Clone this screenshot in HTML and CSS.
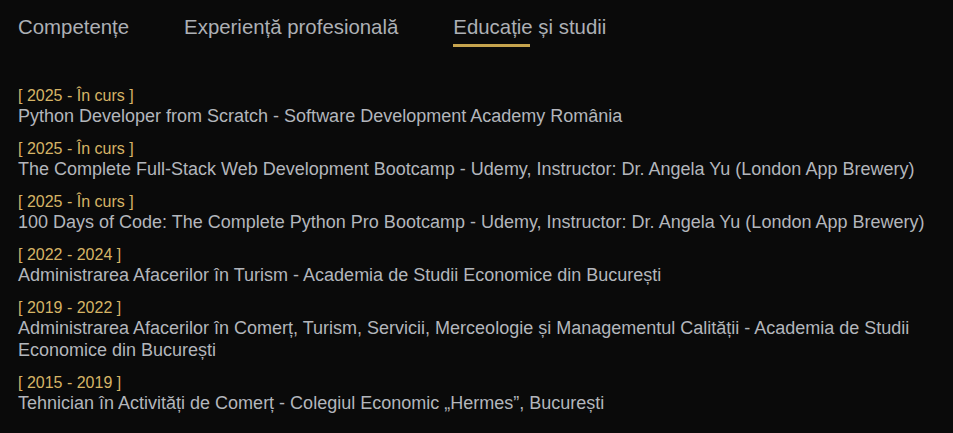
FILE: index.html
```html
<!DOCTYPE html>
<html lang="ro">
<head>
<meta charset="utf-8">
<title>Educație și studii</title>
<link rel="stylesheet" href="styles.css">
</head>
<body>
<div class="page">
  <nav class="tabs">
    <span class="tab">Competențe</span>
    <span class="tab">Experiență profesională</span>
    <span class="tab active">Educație și studii</span>
  </nav>
  <ul class="edu">
    <li class="item"><div class="date">[ 2025 - În curs ]</div><div class="title">Python Developer from Scratch - Software Development Academy România</div></li>
    <li class="item"><div class="date">[ 2025 - În curs ]</div><div class="title">The Complete Full-Stack Web Development Bootcamp - Udemy, Instructor: Dr. Angela Yu (London App Brewery)</div></li>
    <li class="item"><div class="date">[ 2025 - În curs ]</div><div class="title">100 Days of Code: The Complete Python Pro Bootcamp - Udemy, Instructor: Dr. Angela Yu (London App Brewery)</div></li>
    <li class="item"><div class="date">[ 2022 - 2024 ]</div><div class="title">Administrarea Afacerilor în Turism - Academia de Studii Economice din București</div></li>
    <li class="item"><div class="date">[ 2019 - 2022 ]</div><div class="title">Administrarea Afacerilor în Comerț, Turism, Servicii, Merceologie și Managementul Calității - Academia de Studii Economice din București</div></li>
    <li class="item"><div class="date">[ 2015 - 2019 ]</div><div class="title">Tehnician în Activități de Comerț - Colegiul Economic „Hermes”, București</div></li>
  </ul>
</div>
</body>
</html>
```

FILE: styles.css
```css
html, body {
  margin: 0;
  padding: 0;
  background: #0a0a0a;
}
body {
  font-family: "Liberation Sans", Arial, sans-serif;
  color: #b3b6bc;
}
.page {
  padding: 16px 18px 0 18px;
}
.tabs {
  display: flex;
  gap: 55px;
}
.tab {
  position: relative;
  font-size: 20.4px;
  line-height: 23px;
  color: #adb0b5;
  padding-bottom: 8px;
}
.tab.active::after {
  content: "";
  position: absolute;
  left: 0;
  bottom: 0;
  width: 50%;
  height: 3px;
  background: #c6a44e;
}
.edu {
  list-style: none;
  margin: 39px 0 0 0;
  padding: 0;
  display: flex;
  flex-direction: column;
  gap: 11.5px;
}
.date {
  font-size: 16px;
  line-height: 20px;
  color: #d6b466;
}
.title {
  font-size: 18px;
  line-height: 21.6px;
  color: #b3b6bc;
}
```
